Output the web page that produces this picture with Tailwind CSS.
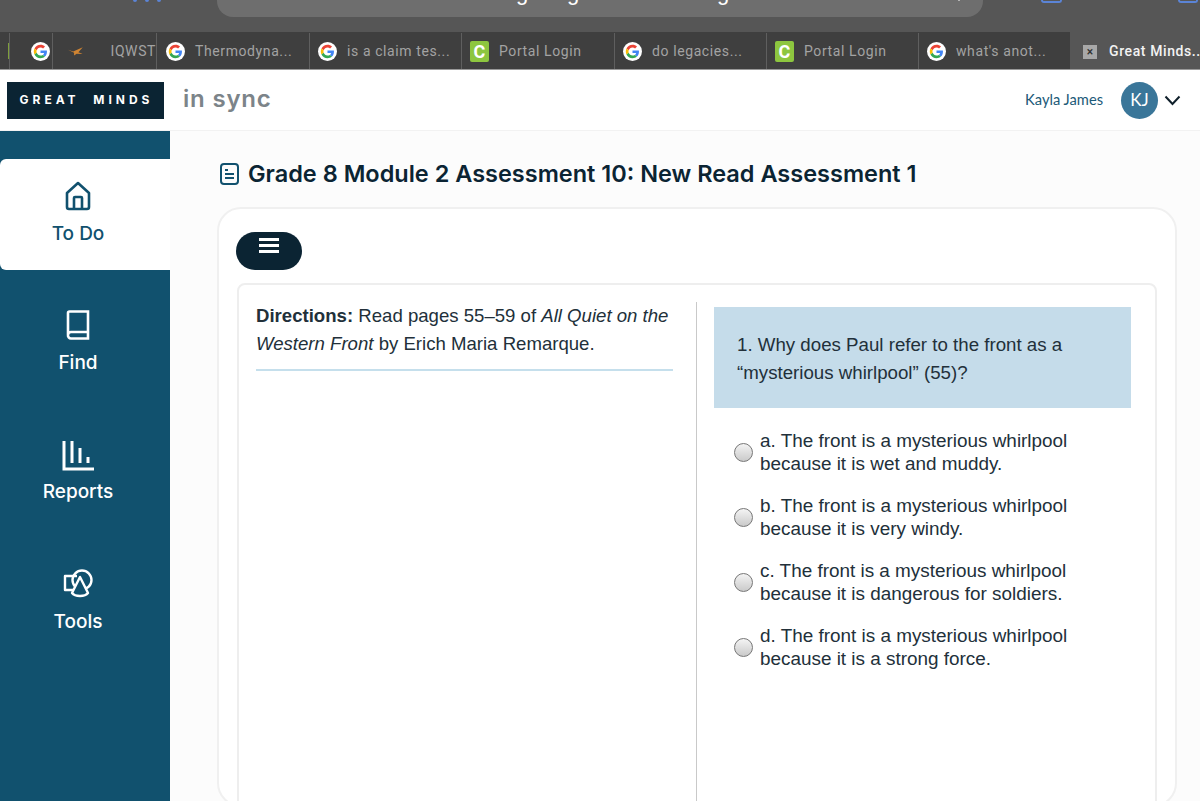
<!DOCTYPE html>
<html lang="en">
<head>
  <meta charset="UTF-8" />
  <title>Great Minds in sync</title>
  <script src="https://cdn.jsdelivr.net/npm/@tailwindcss/browser@4"></script>
</head>
<body class="bg-white">
  <svg width="0" height="0" class="absolute">
    <symbol id="g" viewBox="0 0 48 48">
      <circle cx="24" cy="24" r="24" fill="#fff"/>
      <g transform="translate(7 7) scale(.708)">
        <path fill="#EA4335" d="M24 9.500c3.500 0 6.700 1.200 9.200 3.600l6.900-6.900C35.900 2.400 30.500 0 24 0 14.600 0 6.500 5.400 2.600 13.200l8 6.200C12.400 13.700 17.700 9.500 24 9.500z"/>
        <path fill="#4285F4" d="M47 24.500c0-1.600-.1-3.100-.4-4.500H24v9h12.900c-.6 3-2.200 5.500-4.700 7.200l7.700 6c4.500-4.200 7.100-10.300 7.100-17.700z"/>
        <path fill="#FBBC05" d="M10.500 28.600c-.5-1.400-.8-3-.8-4.600s.3-3.200.8-4.600l-8-6.200C.9 16.400 0 20.100 0 24s.9 7.600 2.600 10.800l7.900-6.200z"/>
        <path fill="#34A853" d="M24 48c6.500 0 11.900-2.100 15.900-5.800l-7.700-6c-2.200 1.500-4.900 2.300-8.200 2.300-6.300 0-11.600-4.200-13.500-9.900l-8 6.200C6.500 42.600 14.600 48 24 48z"/>
      </g>
    </symbol>
  </svg>

  <div class="w-[1200px] h-[801px] overflow-hidden flex flex-col font-['Liberation_Sans',sans-serif]">
    <!-- browser toolbar, cut off by the top of the photo -->
    <div class="relative h-8 shrink-0 bg-[#565656] flex pl-[217px]">
      <div class="absolute left-[133px] top-0 flex gap-[8px]">
        <span class="w-[4px] h-[2px] rounded-b-full bg-[#5b84d6]"></span>
        <span class="w-[4px] h-[2px] rounded-b-full bg-[#5b84d6]"></span>
        <span class="w-[4px] h-[2px] rounded-b-full bg-[#5b84d6]"></span>
      </div>
      <div class="relative w-[766px] h-[17px] bg-[#6e6e6e] rounded-b-2xl overflow-hidden text-white text-[22px] leading-[22px]">
        <span class="absolute left-[299px] -top-[18px]">g</span>
        <span class="absolute left-[350px] -top-[18px]">g</span>
        <span class="absolute left-[500px] -top-[18px]">g</span>
        <span class="absolute left-[741px] top-0 w-[2px] h-[1px] bg-[#b5b5b5]"></span>
      </div>
      <span class="absolute left-[1041px] top-0 w-[21px] h-[3px] rounded-b-[3px] border-b-2 border-x-2 border-[#5b84d6]"></span>
      <span class="absolute left-[1178px] top-0 w-[20px] h-[3px] rounded-b-[3px] border-b-2 border-x-2 border-[#5b84d6]"></span>
    </div>

    <!-- tab strip -->
    <div class="h-[38px] shrink-0 bg-[#3f3f3f] flex font-['Roboto',sans-serif] text-[14px] tracking-[.6px] text-[#a3a3a3] border-b border-[#9a9a9a] pt-[1px]">
      <div class="w-[10px] shrink-0 border-r border-[#5f5f5f] flex items-center"><span class="ml-[8px] w-[2px] h-4 bg-[#7fa03c]"></span></div>
      <div class="w-[43px] shrink-0 border-r border-[#5f5f5f] flex items-center pl-[21px]"><svg class="w-[19px] h-[19px] shrink-0"><use href="#g"/></svg></div>
      <div class="w-[104px] shrink-0 border-r border-[#5f5f5f] flex items-center whitespace-nowrap">
        <svg class="ml-[15px] w-[18px] h-[11px]" viewBox="0 0 18 10"><path d="M0 3l6 2 11-5-5 6 5 2-7-.5-3 2 0-3z" fill="#d08432"/></svg>
        <span class="ml-[27px]">IQWST</span>
      </div>
      <div class="w-[153px] shrink-0 border-r border-[#5f5f5f] flex items-center pl-[9px] gap-[10px]"><svg class="w-[19px] h-[19px] shrink-0"><use href="#g"/></svg><span>Thermodyna...</span></div>
      <div class="w-[152px] shrink-0 border-r border-[#5f5f5f] flex items-center pl-[8px] gap-[10px]"><svg class="w-[19px] h-[19px] shrink-0"><use href="#g"/></svg><span>is a claim tes...</span></div>
      <div class="w-[153px] shrink-0 border-r border-[#5f5f5f] flex items-center pl-[8px] gap-[10px]"><span class="w-[19px] h-[21px] shrink-0 rounded-[2px] bg-[#8dc63f] text-white font-bold text-[18px] leading-[21px] text-center tracking-normal">C</span><span>Portal Login</span></div>
      <div class="w-[152px] shrink-0 border-r border-[#5f5f5f] flex items-center pl-[8px] gap-[10px]"><svg class="w-[19px] h-[19px] shrink-0"><use href="#g"/></svg><span>do legacies...</span></div>
      <div class="w-[152px] shrink-0 border-r border-[#5f5f5f] flex items-center pl-[8px] gap-[10px]"><span class="w-[19px] h-[21px] shrink-0 rounded-[2px] bg-[#8dc63f] text-white font-bold text-[18px] leading-[21px] text-center tracking-normal">C</span><span>Portal Login</span></div>
      <div class="w-[151px] shrink-0 flex items-center pl-[8px] gap-[10px]"><svg class="w-[19px] h-[19px] shrink-0"><use href="#g"/></svg><span>what's anot...</span></div>
      <div class="w-[130px] shrink-0 -mt-[1px] pt-[2px] bg-[#565656] flex items-center pl-[13px] gap-[12px] text-[#f2f2f2] whitespace-nowrap overflow-hidden font-medium">
        <span class="w-[14px] h-[14px] shrink-0 bg-[#a8a8a8] text-[#333] text-[12px] leading-[14px] text-center tracking-normal">×</span><span>Great Minds...</span>
      </div>
    </div>

    <!-- site header -->
    <header class="h-[61px] shrink-0 bg-white border-b border-[#f2f2f2] flex items-center pl-[7px] pr-[19px]">
      <div class="w-[157px] h-[37px] pl-[2px] bg-[#0b2433] text-white font-['Inter',sans-serif] font-bold text-[12px] tracking-[4px] flex items-center justify-center whitespace-pre">GREAT  MINDS</div>
      <div class="ml-[19px] -mt-[2px] font-['Inter',sans-serif] font-semibold text-[24px] tracking-[.8px] text-[#7c8489]">in sync</div>
      <div class="ml-auto -mt-[1px] font-['Lato',sans-serif] text-[14.7px] text-[#1c5a78]">Kayla James</div>
      <div class="ml-[18px] w-[37px] h-[37px] rounded-full bg-[#3a7699] text-white font-['Lato',sans-serif] text-[17px] flex items-center justify-center">KJ</div>
      <svg class="ml-[6px] w-[17px] h-[11px]" viewBox="0 0 17 11" fill="none" stroke="#10202b" stroke-width="2"><path d="M1.500 1.500l7 7.500 7-7.500"/></svg>
    </header>

    <div class="flex-1 flex min-h-0">
      <!-- sidebar -->
      <aside class="w-[170px] shrink-0 bg-[#11516e] pt-[28px] text-white font-['Inter',sans-serif] font-medium text-[19px]">
        <div class="h-[111px] bg-white rounded-l-[6px] text-[#11516e] flex flex-col items-center pr-[14px] pt-[22px]">
          <svg class="w-[28px] h-[30px]" viewBox="0 0 28 30" fill="none" stroke="currentColor" stroke-width="2.600" stroke-linejoin="round"><path d="M14 2L3 12v14a2 2 0 002 2h18a2 2 0 002-2V12z"/><path d="M10 28V17a1 1 0 011-1h6a1 1 0 011 1v11"/></svg>
          <span class="mt-[9px]">To Do</span>
        </div>
        <div class="h-[129px] flex flex-col items-center pr-[14px] pt-[40px]">
          <svg class="w-[24px] h-[30px]" viewBox="0 0 24 30" fill="none" stroke="currentColor" stroke-width="2.600"><path d="M2 25V3a1.500 1.500 0 011.500-1.500H22V28.500H5A3 3 0 012 25a3 3 0 013-3h17"/></svg>
          <span class="mt-[9px]">Find</span>
        </div>
        <div class="h-[129px] flex flex-col items-center pr-[14px] pt-[42px]">
          <svg class="w-[32px] h-[30px]" viewBox="0 0 32 30" fill="none" stroke="currentColor" stroke-width="3"><path d="M2 0v28h30M10 0v22M18 7v15M26 16v6"/></svg>
          <span class="mt-[7px]">Reports</span>
        </div>
        <div class="h-[129px] flex flex-col items-center pr-[14px] pt-[41px]">
          <svg class="w-[30px] h-[30px]" viewBox="0 0 30 30" fill="none" stroke="currentColor" stroke-width="2.400" stroke-linejoin="round"><path d="M11 21H2V7h12"/><circle cx="19" cy="11" r="9.500"/><path d="M17 8L9 24c3 4 13 4 16 0z" fill="#11516e"/></svg>
          <span class="mt-[9px]">Tools</span>
        </div>
      </aside>

      <!-- main -->
      <main class="flex-1 min-w-0 bg-[#fcfcfc] pl-[47px] pr-[23px]">
        <div class="h-[76px] flex items-center pl-[3px] pt-[9px]">
          <svg class="w-[19px] h-[22px]" viewBox="0 0 19 22" fill="none" stroke="#11516e" stroke-width="2"><rect x="1" y="1" width="17" height="20" rx="3"/><path d="M5 7h3M5 11h9M5 15h9"/></svg>
          <h1 class="ml-[9px] font-['Inter',sans-serif] font-semibold text-[23.500px] text-[#0b2433] whitespace-nowrap">Grade 8 Module 2 Assessment 10: New Read Assessment 1</h1>
        </div>
        <div class="h-[600px] bg-white border-2 border-[#f0f0f0] rounded-[24px] px-[17px] pt-[23px]">
          <button class="w-[66px] h-[38px] rounded-full bg-[#0b2433] flex justify-center pt-[6px]">
            <svg class="w-[20px] h-[15px]" viewBox="0 0 20 15" fill="none" stroke="#fff" stroke-width="3"><path d="M0 1.500h20M0 7.500h20M0 13.500h20"/></svg>
          </button>
          <div class="mt-[13px] ml-[1px] w-[920px] h-[600px] border-2 border-[#eeeeee] rounded-[8px] flex pl-[17px] pt-[17px] text-[18.900px] text-[#22303a]">
            <div class="w-[417px] shrink-0">
              <p class="text-[18.600px] leading-[28px] h-[69px] whitespace-nowrap border-b-2 border-[#c5dfec]"><b>Directions:</b> Read pages 55–59 of <i>All Quiet on the<br>Western Front</i> by Erich Maria Remarque.</p>
            </div>
            <div class="ml-[23px] pl-[17px] border-l border-[#c9c9c9] w-[435px]">
              <div class="mt-[5px] w-[417px] h-[101px] bg-[#c5dcea] pl-[23px] pt-[24px] text-[18.700px] leading-[28px]">1. Why does Paul refer to the front as a “mysterious whirlpool” (55)?</div>
              <div class="mt-[21px] flex flex-col gap-[19px] leading-[23px]">
                <label class="flex items-center gap-[7px] pl-[20px]"><span class="w-[19px] h-[19px] shrink-0 rounded-full border border-[#777] bg-linear-to-b from-[#f4f4f4] to-[#cacaca]"></span><span>a. The front is a mysterious whirlpool<br>because it is wet and muddy.</span></label>
                <label class="flex items-center gap-[7px] pl-[20px]"><span class="w-[19px] h-[19px] shrink-0 rounded-full border border-[#777] bg-linear-to-b from-[#f4f4f4] to-[#cacaca]"></span><span>b. The front is a mysterious whirlpool<br>because it is very windy.</span></label>
                <label class="flex items-center gap-[7px] pl-[20px]"><span class="w-[19px] h-[19px] shrink-0 rounded-full border border-[#777] bg-linear-to-b from-[#f4f4f4] to-[#cacaca]"></span><span>c. The front is a mysterious whirlpool<br>because it is dangerous for soldiers.</span></label>
                <label class="flex items-center gap-[7px] pl-[20px]"><span class="w-[19px] h-[19px] shrink-0 rounded-full border border-[#777] bg-linear-to-b from-[#f4f4f4] to-[#cacaca]"></span><span>d. The front is a mysterious whirlpool<br>because it is a strong force.</span></label>
              </div>
            </div>
          </div>
        </div>
      </main>
    </div>
  </div>
</body>
</html>
